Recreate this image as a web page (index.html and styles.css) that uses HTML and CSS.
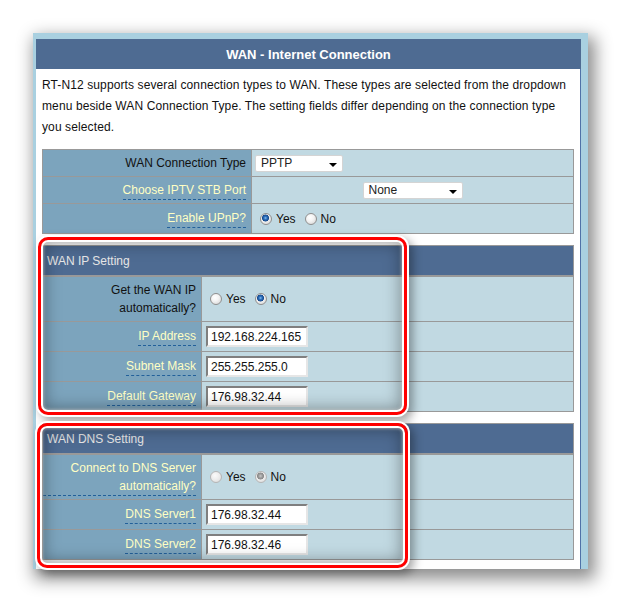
FILE: index.html
```html
<!DOCTYPE html>
<html>
<head>
<meta charset="utf-8">
<link rel="stylesheet" href="styles.css">
</head>
<body>
<div class="page">
  <div class="frame">
    <div class="title">WAN - Internet Connection</div>
    <div class="content">
      <p class="desc">RT-N12 supports several connection types to WAN. These types are selected from the dropdown menu beside WAN Connection Type. The setting fields differ depending on the connection type you selected.</p>

      <div class="form wide">
        <div class="row r26">
          <div class="lbl"><span class="plain">WAN Connection Type</span></div>
          <div class="val"><span class="select sel-pptp">PPTP</span></div>
        </div>
        <div class="row r26">
          <div class="lbl"><span class="hint">Choose IPTV STB Port</span></div>
          <div class="val center"><span class="select sel-none">None</span></div>
        </div>
        <div class="row r29">
          <div class="lbl"><span class="hint">Enable UPnP?</span></div>
          <div class="val radios">
            <span class="radio on"></span><span class="rtext">Yes</span>
            <span class="radio"></span><span class="rtext">No</span>
          </div>
        </div>
      </div>

      <div class="section">
        <div class="form narrow">
          <div class="shead">WAN IP Setting</div>
          <div class="row r44">
            <div class="lbl"><span class="plain">Get the WAN IP automatically?</span></div>
            <div class="val radios">
              <span class="radio"></span><span class="rtext">Yes</span>
              <span class="radio on"></span><span class="rtext">No</span>
            </div>
          </div>
          <div class="row r29">
            <div class="lbl"><span class="hint">IP Address</span></div>
            <div class="val"><span class="field">192.168.224.165</span></div>
          </div>
          <div class="row r29">
            <div class="lbl"><span class="hint">Subnet Mask</span></div>
            <div class="val"><span class="field">255.255.255.0</span></div>
          </div>
          <div class="row r29">
            <div class="lbl"><span class="hint">Default Gateway</span></div>
            <div class="val"><span class="field">176.98.32.44</span></div>
          </div>
        </div>
        <div class="hl hl-ip"></div>
      </div>

      <div class="section">
        <div class="form narrow">
          <div class="shead">WAN DNS Setting</div>
          <div class="row r44">
            <div class="lbl"><span class="hint">Connect to DNS Server automatically?</span></div>
            <div class="val radios">
              <span class="radio dis"></span><span class="rtext">Yes</span>
              <span class="radio dis on"></span><span class="rtext">No</span>
            </div>
          </div>
          <div class="row r29">
            <div class="lbl"><span class="hint">DNS Server1</span></div>
            <div class="val"><span class="field">176.98.32.44</span></div>
          </div>
          <div class="row r29">
            <div class="lbl"><span class="hint">DNS Server2</span></div>
            <div class="val"><span class="field">176.98.32.46</span></div>
          </div>
        </div>
        <div class="hl hl-dns"></div>
      </div>
    </div>
  </div>
</div>
</body>
</html>
```

FILE: styles.css
```css
html, body {
  margin: 0;
  padding: 0;
  background: #ffffff;
  font-family: "Liberation Sans", Arial, sans-serif;
  font-size: 12px;
  color: #111;
}

.page {
  padding: 33px 0 0 33px;
  height: 568px;
  overflow: hidden;
}

.frame {
  width: 555px;
  box-sizing: border-box;
  background: #a9d0e0;
  padding: 6px 7px 0 3px;
  box-shadow: 4px 7px 16px 3px rgba(0, 0, 0, 0.45);
}

.title {
  height: 30px;
  background: #4e6b92;
  color: #ffffff;
  font-weight: bold;
  font-size: 13px;
  display: flex;
  align-items: center;
  justify-content: center;
}

.content {
  background: #ffffff;
  border-right: 1px solid #4f72a8;
  padding: 0 6px 9px 6px;
}

.desc {
  margin: 0;
  padding-top: 6px;
  line-height: 21px;
  letter-spacing: 0.11px;
  color: #111;
}

.form {
  border: 1px solid #999;
  margin-top: 11px;
  background: #c1d9e2;
}

.wide { --lw: 209px; }
.narrow { --lw: 159px; }

.row {
  display: grid;
  grid-template-columns: var(--lw) 1fr;
  border-top: 1px solid #999;
}
.form > .row:first-child { border-top: none; }

.r26 { height: 26px; }
.r29 { height: 29px; }
.r44 { height: 44px; }

.lbl {
  background: #7ca4bd;
  border-right: 1px solid #999;
  display: flex;
  align-items: center;
  justify-content: flex-end;
  text-align: right;
  padding-right: 5px;
  line-height: 18px;
}

.plain { color: #111; }

.hint {
  color: #ffffc4;
  border-bottom: 1px dashed #22609a;
}

.val {
  display: flex;
  align-items: center;
  padding-left: 3px;
}
.val.center { justify-content: center; padding-left: 0; }

.select {
  display: flex;
  align-items: center;
  box-sizing: border-box;
  height: 17px;
  background: #ffffff;
  border: 1px solid #d4d4d4;
  border-radius: 2px;
  padding-left: 5px;
  color: #222;
}
.select::after {
  content: "";
  margin: 3px 5px 0 auto;
  border-left: 4px solid transparent;
  border-right: 4px solid transparent;
  border-top: 4px solid #000;
}
.sel-pptp { width: 88px; }
.sel-none { width: 100px; }

.radios { padding-left: 8px; }
.radio {
  width: 12px;
  height: 12px;
  box-sizing: border-box;
  border-radius: 50%;
  border: 1px solid #8f8f8f;
  background: radial-gradient(circle at 40% 35%, #ffffff 0, #f4f4f4 40%, #cfcfcf 100%);
  flex: none;
}
.radio.on {
  background:
    radial-gradient(circle at 45% 40%, #8cc4f0 0, #2f72c0 1.5px, #164a8c 3.2px, transparent 3.8px),
    radial-gradient(circle at 40% 35%, #ffffff 0, #f4f4f4 40%, #cfcfcf 100%);
}
.radio.dis {
  border-color: #b5b5b5;
  background: radial-gradient(circle at 40% 35%, #fafafa 0, #ececec 50%, #d6d6d6 100%);
}
.radio.dis.on {
  background:
    radial-gradient(circle at 45% 40%, #c8c8c8 0, #9a9a9a 2px, #8a8a8a 3.2px, transparent 3.8px),
    radial-gradient(circle at 40% 35%, #fafafa 0, #ececec 50%, #d6d6d6 100%);
}
.rtext {
  margin-left: 4px;
  margin-right: 9px;
  color: #111;
}

.field {
  display: flex;
  align-items: center;
  box-sizing: border-box;
  width: 102px;
  height: 21px;
  margin-left: 1px;
  background: #ffffff;
  border: 2px solid;
  border-color: #7f7f7f #e6e6e6 #e6e6e6 #7f7f7f;
  padding-left: 3px;
  color: #111;
}

.section {
  position: relative;
}

.shead {
  height: 29px;
  background: #4e6b92;
  color: #e6e6e6;
  display: flex;
  align-items: center;
  padding-left: 4px;
  border-bottom: 1px solid #999;
}

.hl {
  position: absolute;
  box-sizing: border-box;
  border: 3px solid #ff0000;
  border-radius: 10px;
  pointer-events: none;
  box-shadow:
    0 0 0 2px #ffffff,
    4px 4px 10px 2px rgba(0, 0, 0, 0.35),
    inset 0 0 0 2px #ffffff,
    inset 0 0 3px 3px rgba(200, 200, 200, 0.6),
    inset 0 0 16px 4px rgba(0, 0, 0, 0.35);
}
.hl-ip {
  left: -4px;
  top: -8px;
  width: 369px;
  height: 178px;
}
.hl-dns {
  left: -5px;
  top: 0;
  width: 371px;
  height: 145px;
}
```
